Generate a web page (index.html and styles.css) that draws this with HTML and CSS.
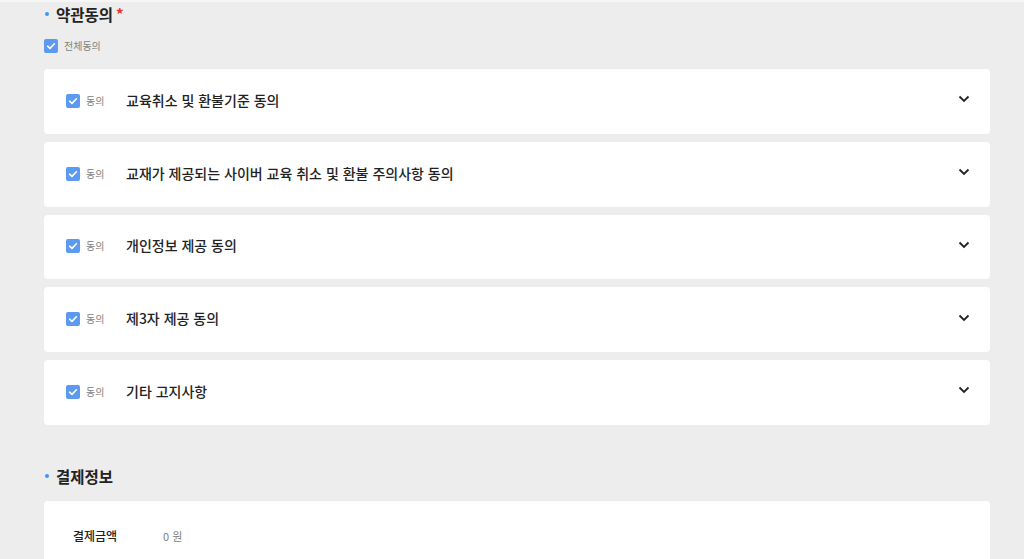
FILE: index.html
```html
<!DOCTYPE html>
<html lang="ko">
<head>
<meta charset="utf-8">
<link rel="stylesheet" href="styles.css">
</head>
<body>
<div class="topline"></div>
<main class="wrap">
  <section class="section">
    <h2 class="sec-title"><span class="dot"></span>약관동의<span class="req">*</span></h2>
    <label class="all-agree"><span class="cb"><svg viewBox="0 0 14 14"><path d="M3.6 7.2 6 9.4 10.4 4.8" fill="none" stroke="#fff" stroke-width="1.6" stroke-linecap="round" stroke-linejoin="round"/></svg></span><span class="small-label">전체동의</span></label>
    <div class="cards">
      <div class="card">
        <div class="agree"><span class="cb"><svg viewBox="0 0 14 14"><path d="M3.6 7.2 6 9.4 10.4 4.8" fill="none" stroke="#fff" stroke-width="1.6" stroke-linecap="round" stroke-linejoin="round"/></svg></span><span class="small-label">동의</span></div>
        <div class="title">교육취소 및 환불기준 동의</div>
        <svg class="chev" viewBox="0 0 12 8"><path d="M1.5 1.5 6 6 10.5 1.5" fill="none" stroke="#222" stroke-width="1.8"/></svg>
      </div>
      <div class="card">
        <div class="agree"><span class="cb"><svg viewBox="0 0 14 14"><path d="M3.6 7.2 6 9.4 10.4 4.8" fill="none" stroke="#fff" stroke-width="1.6" stroke-linecap="round" stroke-linejoin="round"/></svg></span><span class="small-label">동의</span></div>
        <div class="title">교재가 제공되는 사이버 교육 취소 및 환불 주의사항 동의</div>
        <svg class="chev" viewBox="0 0 12 8"><path d="M1.5 1.5 6 6 10.5 1.5" fill="none" stroke="#222" stroke-width="1.8"/></svg>
      </div>
      <div class="card">
        <div class="agree"><span class="cb"><svg viewBox="0 0 14 14"><path d="M3.6 7.2 6 9.4 10.4 4.8" fill="none" stroke="#fff" stroke-width="1.6" stroke-linecap="round" stroke-linejoin="round"/></svg></span><span class="small-label">동의</span></div>
        <div class="title">개인정보 제공 동의</div>
        <svg class="chev" viewBox="0 0 12 8"><path d="M1.5 1.5 6 6 10.5 1.5" fill="none" stroke="#222" stroke-width="1.8"/></svg>
      </div>
      <div class="card">
        <div class="agree"><span class="cb"><svg viewBox="0 0 14 14"><path d="M3.6 7.2 6 9.4 10.4 4.8" fill="none" stroke="#fff" stroke-width="1.6" stroke-linecap="round" stroke-linejoin="round"/></svg></span><span class="small-label">동의</span></div>
        <div class="title">제3자 제공 동의</div>
        <svg class="chev" viewBox="0 0 12 8"><path d="M1.5 1.5 6 6 10.5 1.5" fill="none" stroke="#222" stroke-width="1.8"/></svg>
      </div>
      <div class="card">
        <div class="agree"><span class="cb"><svg viewBox="0 0 14 14"><path d="M3.6 7.2 6 9.4 10.4 4.8" fill="none" stroke="#fff" stroke-width="1.6" stroke-linecap="round" stroke-linejoin="round"/></svg></span><span class="small-label">동의</span></div>
        <div class="title">기타 고지사항</div>
        <svg class="chev" viewBox="0 0 12 8"><path d="M1.5 1.5 6 6 10.5 1.5" fill="none" stroke="#222" stroke-width="1.8"/></svg>
      </div>
    </div>
  </section>
  <section class="section pay">
    <h2 class="sec-title"><span class="dot"></span>결제정보</h2>
    <div class="pay-card">
      <div class="pay-row"><span class="pay-label">결제금액</span><span class="pay-value">0 원</span></div>
    </div>
  </section>
</main>
</body>
</html>
```

FILE: styles.css
```css
* { box-sizing: border-box; }
html, body { margin: 0; padding: 0; }
body {
  background: #ededed;
  font-family: "Noto Sans CJK KR", "Noto Sans", sans-serif;
  color: #222;
  height: 559px;
  overflow: hidden;
}
.topline { height: 2px; background: #f6f6f6; }
.wrap { width: 946px; margin-left: 44px; }
.sec-title {
  margin: 0;
  display: flex;
  align-items: center;
  font-size: 15.5px;
  font-weight: 700;
  line-height: 24px;
  height: 24px;
  color: #222;
}
.dot {
  width: 4px; height: 4px; border-radius: 50%;
  background: #3d95f5;
  margin-left: 1px; margin-right: 7px;
}
.req { color: #e5322d; margin-left: 3px; font-size: 15px; }
.all-agree {
  display: flex; align-items: center;
  margin-top: 13px; height: 14px;
}
.cb {
  width: 14px; height: 14px; border-radius: 2px;
  background: #5b9af0;
  display: flex; flex: none;
}
.cb svg { width: 14px; height: 14px; }
.small-label { font-size: 10px; color: #808080; margin-left: 6px; line-height: 14px; }
.cards { margin-top: 16px; display: flex; flex-direction: column; gap: 8px; }
.card {
  background: #fff;
  border-radius: 4px;
  height: 64.75px;
  display: flex;
  align-items: center;
  padding: 0 20px 0 22px;
}
.agree { display: flex; align-items: center; width: 60px; flex: none; margin-top: -1px; }
.title { flex: 1; font-size: 14px; font-weight: 500; color: #222; line-height: 20px; margin-top: -3px; }
.chev { width: 12px; height: 8px; margin-top: -4px; }
.pay { margin-top: 39px; }
.pay-card {
  margin-top: 13px;
  background: #fff;
  border-radius: 4px;
  height: 70px;
  padding: 26px 29px 0;
}
.pay-row { display: flex; align-items: center; height: 18px; }
.pay-label { width: 90px; font-size: 12px; font-weight: 500; color: #222; }
.pay-value { font-size: 11px; color: #808080; }
```
